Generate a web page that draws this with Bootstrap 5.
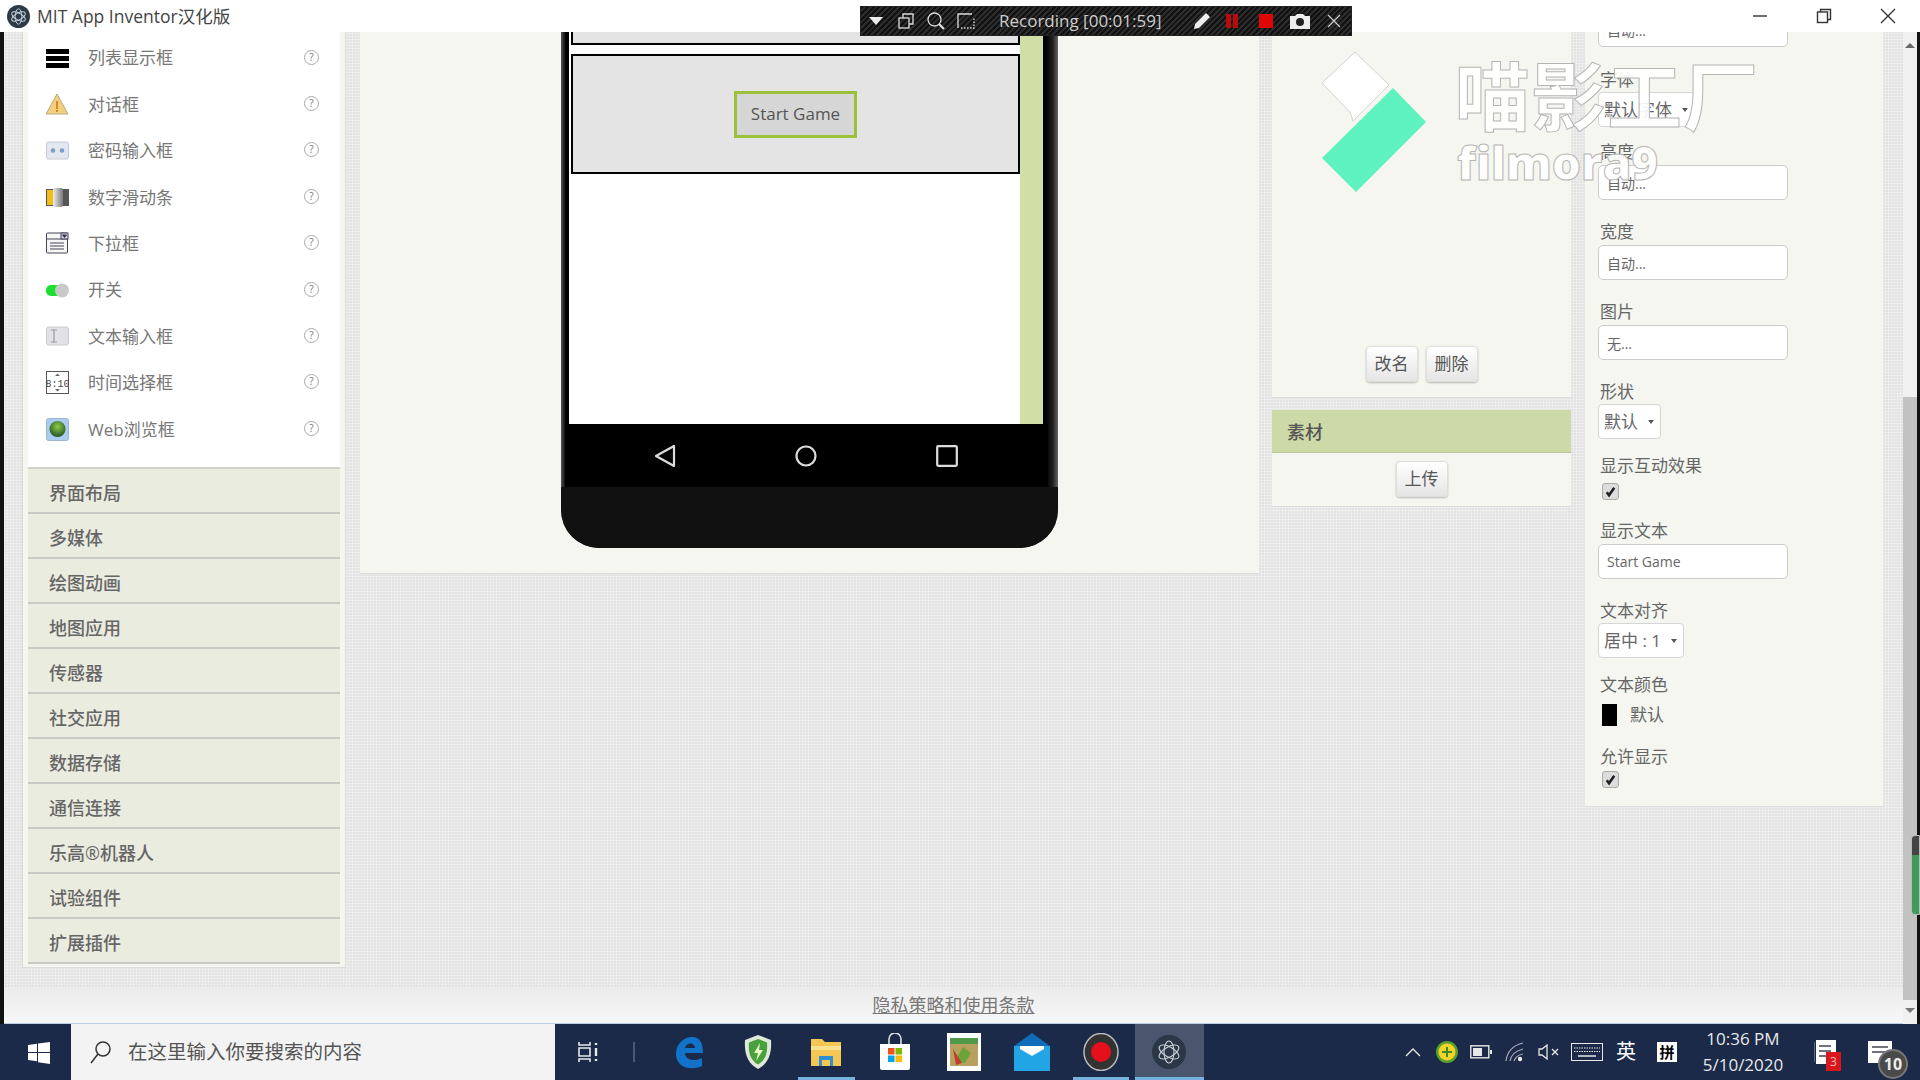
<!DOCTYPE html>
<html lang="zh-CN">
<head>
  <meta charset="UTF-8" />
  <meta name="viewport" content="width=device-width, initial-scale=1" />
  <title>MIT App Inventor汉化版</title>
  <link href="https://cdn.jsdelivr.net/npm/bootstrap@5.3.3/dist/css/bootstrap.min.css" rel="stylesheet">
  <style>
    html, body {
      height: 100%;
      margin: 0;
      overflow: hidden;
      font-family: "Open Sans", "Noto Sans CJK SC", sans-serif;
      color: #666;
    }

    .app-frame { width: 1920px; height: 1080px; position: relative; overflow: hidden; background: #fff; }

    /* Title bar */
    .title-bar { height: 32px; background: #fff; position: relative; z-index: 2; font-size: 17.5px; color: #444; }
    .title-logo { width: 23px; height: 23px; margin-left: 7px; margin-right: 7px; }
    .win-btn { width: 64px; display: flex; justify-content: center; }

    /* Main area */
    .work-row { height: 992px; }
    .edge-left { width: 4px; background: #111; flex: none; }
    .edge-right { width: 3px; background: #111; flex: none; }
    .work-col { width: 1899px; }
    .work-area {
      height: 956px;
      overflow: hidden;
      background-color: #e3e3e3;
      background-image:
        repeating-linear-gradient(0deg, rgba(255,255,255,.3) 0 1px, transparent 1px 3px),
        repeating-linear-gradient(90deg, rgba(255,255,255,.3) 0 1px, transparent 1px 3px);
      padding-left: 18px;
    }
    .page-footer {
      height: 36px;
      background: linear-gradient(#ececec, #f7f7f7);
      border-bottom: 1px solid #bcd0e6;
      font-size: 18px;
    }
    .page-footer a { color: #777; }

    .scroll-track { width: 14px; background: #f0f0f0; flex: none; position: relative; font-size: 0; }
    .scroll-thumb { position: absolute; left: 0; right: 0; top: 365px; height: 603px; background: #c2c2c2; }
    .scroll-arrow { position: absolute; left: 2px; width: 0; height: 0; border-left: 5px solid transparent; border-right: 5px solid transparent; }
    .scroll-arrow-up { top: 11px; border-bottom: 5px solid #666; }
    .scroll-arrow-down { top: 976px; border-top: 5px solid #777; }
    .float-meter {
      position: absolute; left: 8px; top: 803px; width: 9px; height: 80px;
      background: linear-gradient(#444 0 25%, #3f9a5b 25% 100%);
      border-radius: 4px 0 0 4px; border: 1px solid #bbb;
    }

    /* Palette */
    .palette { width: 324px; height: 936px; padding: 0 5px; background: #f5f6f0; border: 1px solid #dcdcdc; border-top: 0; flex: none; }
    .palette-list { background: #fff; height: 437px; padding-top: 3px; border-bottom: 2px solid #d0d0cc; }
    .palette-item { height: 46.4px; padding: 0 21px 0 18px; font-size: 17px; color: #777; }
    .palette-icon { width: 23px; height: 23px; margin-right: 19px; flex: none; }
    .help-mark {
      width: 15px; height: 15px; margin-left: auto; margin-top: -2px; border: 1.5px solid #aaa; border-radius: 50%;
      font-size: 10px; line-height: 12px; text-align: center; color: #777;
    }
    .palette-cat {
      height: 45px; padding: 6px 0 0 21px; background: #ebece0; border-bottom: 2px solid #c9cac3;
      font-size: 18px; font-weight: 500; color: #666;
    }

    /* Viewer */
    .viewer { width: 899px; height: 542px; margin-left: 14px; padding-left: 201px; background: #f5f6f0; border-bottom: 1px solid #ddd; flex: none; }
    .phone {
      width: 497px; height: 516px; background: linear-gradient(90deg, #555 0, #000 5px, #000 485px, #222 492px, #666 497px);
      border-radius: 0 0 38px 38px; overflow: hidden; position: relative;
    }
    .phone-screen { height: 392px; margin-left: 8px; width: 474px; background: #fff; }
    .phone-body { width: 451px; }
    .phone-stripe { width: 23px; background: #d1dea6; }
    .arrange-top { height: 13px; margin-left: 2px; background: #e4e4e4; border: 2px solid #000; border-top: 0; }
    .arrange-main {
      height: 120px; margin-left: 2px; margin-top: 9px; background: #e4e4e4; border: 2px solid #000;
    }
    .game-btn {
      width: 123px; height: 47px; background: #d6d6d6; border: 3px solid #9dc03a; border-radius: 0;
      font-size: 17px; color: #555; padding: 0; font-family: "Open Sans", sans-serif;
    }
    .phone-nav { height: 63px; margin-left: 4px; width: 483px; background: #000; padding: 0 90px 0 89px; }
    .phone-chin { height: 61px; background: #111; }

    /* Project column */
    .project-col { width: 299px; margin-left: 13px; flex: none; }
    .project-box { height: 366px; background: #f5f6f0; padding-bottom: 15px; border-bottom: 1px solid #ddd; }
    .asset-box { margin-top: 12px; height: 97px; background: #f5f6f0; border-bottom: 1px solid #ddd; }
    .asset-head { height: 43px; padding: 2px 0 0 15px; background: #cdd9a6; font-size: 18px; font-weight: 500; color: #555; border-bottom: 1px solid #bcc5a0; }
    .soft-btn {
      width: 52px; height: 36px; padding: 0; font-size: 17px; color: #555;
      background: linear-gradient(#fff, #e5e5e5); border: 1px solid #dedede; border-radius: 4px;
      box-shadow: 0 1px 2px rgba(0,0,0,.25);
    }

    /* Properties */
    .props { width: 298px; height: 775px; margin-left: 14px; padding-left: 13px; background: #f5f6f0; border-bottom: 1px solid #ddd; flex: none; font-size: 17px; color: #666; }
    .prop-label { line-height: 22px; margin-bottom: 2px; padding-left: 2px; }
    .prop-label-wide { margin-bottom: 6px; }
    .prop-label-select { margin-bottom: 1px; }
    .prop-label-end { margin-bottom: 3px; }
    .prop-row { margin-top: 21px; }
    .prop-row-first { margin-top: 22px; }
    .prop-row-narrow { margin-top: 14px; }
    .prop-row-tight { margin-top: 16px; }
    .prop-row-snug { margin-top: 20px; }
    .prop-row-last { margin-top: 18px; }
    .prop-input {
      width: 190px; height: 35px; padding: 0 8px; font-size: 14px; color: #666;
      border: 1px solid #ccc; border-radius: 5px; background: #fff; box-shadow: none;
    }
    .prop-top { margin-top: -20px; }
    .prop-select {
      height: 35px; padding: 0 6px 0 5px; font-size: 17px; color: #666; background: #fff;
      border: 1px solid #d5d5d5; border-radius: 4px; display: inline-flex; align-items: center; gap: 10px;
    }
    .prop-select::after { content: ""; border-left: 3px solid transparent; border-right: 3px solid transparent; border-top: 4px solid #555; }
    .prop-check,
    .prop-check:checked {
      display: block; width: 17px; height: 17px; margin: 0 0 0 4px; border: 1px solid #aaa; border-radius: 3px; background-color: #dcdcdc;
      background-image: url("data:image/svg+xml,%3csvg xmlns='http://www.w3.org/2000/svg' viewBox='0 0 20 20'%3e%3cpath fill='none' stroke='%23222' stroke-width='3.500' d='M5 11l3 4 7-10'/%3e%3c/svg%3e");
    }
    .color-chip { width: 15px; height: 22px; margin-left: 4px; margin-right: 13px; background: #000; }

    /* Overlays */
    .rec-bar {
      position: absolute; left: 860px; top: 6px; width: 492px; height: 30px; z-index: 3;
      background: repeating-linear-gradient(135deg, #111 0 2px, #2c2c2c 2px 4px);
      color: #ccc; font-size: 17px; border: 1px solid #222; white-space: nowrap;
    }
    .rec-slot { width: 30px; display: flex; justify-content: center; align-items: center; flex: none; }
    .rec-text { width: 188px; margin-left: 18px; flex: none; }
    .logo-mark { position: absolute; left: 1318px; top: 48px; width: 112px; height: 148px; z-index: 1; }
    .mark-text {
      position: absolute; z-index: 1; color: rgba(255,255,255,.92); -webkit-text-stroke: 1px #b5b5b5; line-height: 1;
      font-family: "Noto Sans CJK SC", sans-serif; font-weight: 700;
    }
    .mark-cn { left: 1455px; top: 55px; font-size: 75px; letter-spacing: 1px; }
    .mark-en { left: 1457px; top: 139px; font-size: 46px; font-family: "Open Sans", sans-serif; font-weight: 800; }

    /* Taskbar */
    .task-bar { height: 56px; background: #1a2a48; color: #fff; }
    .start-slot { width: 71px; padding-left: 28px; flex: none; }
    .search-slot { width: 484px; height: 56px; background: #f3f3f3; padding-left: 19px; font-size: 19.5px; color: #555; flex: none; }
    .search-slot svg { margin-right: 16px; }
    .view-slot { width: 66px; flex: none; display: flex; justify-content: center; }
    .task-sep { width: 2px; height: 20px; margin: 0 20px 0 12px; background: #4a5870; flex: none; }
    .app-slot { width: 68.6px; height: 56px; display: flex; align-items: center; justify-content: center; flex: none; position: relative; }
    .app-open::after { content: ""; position: absolute; left: 6px; right: 6px; bottom: 0; height: 3px; background: #76b2e0; }
    .app-active { background: #4a566e; }
    .app-active::after { left: 0; right: 0; }
    .tray-zone { margin-left: auto; padding-right: 12px; }
    .tray-slot { width: 34px; display: flex; align-items: center; justify-content: center; flex: none; }
    .tray-key { width: 42px; }
    .tray-ime { width: 36px; font-size: 20px; }
    .tray-pin { width: 46px; }
    .pin-box { width: 20px; height: 20px; background: #fff; color: #000; font-size: 15px; line-height: 20px; text-align: center; font-weight: 700; }
    .tray-clock { width: 108px; font-size: 17px; line-height: 26px; text-align: center; color: #e8e8e8; padding-right: 2px; }
    .tray-note { width: 54px; position: relative; }
    .tray-msg { width: 56px; position: relative; }
    .note-badge {
      position: absolute; left: 28px; top: 12px; width: 15px; height: 19px; background: #d8161c; font-size: 12px; text-align: center; line-height: 19px; color: #fbb;
    }
    .msg-badge {
      position: absolute; left: 26px; top: 8px; width: 30px; height: 30px; border-radius: 50%; background: #4a4a4a; border: 2px solid #777;
      font-size: 16px; font-weight: 700; line-height: 26px; text-align: center; color: #eee;
    }
  </style>
</head>
<body>
<div class="app-frame">

  <!-- title bar -->
  <div class="title-bar d-flex align-items-center">
    <svg class="title-logo" viewBox="0 0 24 24"><circle cx="12" cy="12" r="12" fill="#2c3947"/><g fill="none" stroke="#c8d0d8" stroke-width="1"><ellipse cx="12" cy="12" rx="8" ry="3.5" transform="rotate(30 12 12)"/><ellipse cx="12" cy="12" rx="8" ry="3.5" transform="rotate(90 12 12)"/><ellipse cx="12" cy="12" rx="8" ry="3.5" transform="rotate(150 12 12)"/></g></svg>
    <span>MIT App Inventor汉化版</span>
    <div class="ms-auto d-flex align-items-center">
      <div class="win-btn"><svg width="16" height="16" viewBox="0 0 16 16"><path d="M1 8h14" stroke="#333" stroke-width="1.4"/></svg></div>
      <div class="win-btn"><svg width="16" height="16" viewBox="0 0 16 16" fill="none" stroke="#333" stroke-width="1.4"><rect x="1.5" y="4" width="10" height="10.5"/><path d="M4.5 4V1.5h10V11.5h-3"/></svg></div>
      <div class="win-btn"><svg width="16" height="16" viewBox="0 0 16 16"><path d="M1 1l14 14M15 1L1 15" stroke="#333" stroke-width="1.4"/></svg></div>
    </div>
  </div>

  <div class="work-row d-flex">
    <div class="edge-left"></div>
    <div class="work-col d-flex flex-column">
      <div class="work-area d-flex align-items-start">

        <!-- palette -->
        <div class="palette">
          <div class="palette-list">
            <div class="palette-item d-flex align-items-center">
              <svg class="palette-icon" viewBox="0 0 23 23"><path d="M0 2h23v5H0zM0 9h23v5H0zM0 16h23v5H0z" fill="#000"/></svg>
              <span>列表显示框</span><span class="help-mark">?</span>
            </div>
            <div class="palette-item d-flex align-items-center">
              <svg class="palette-icon" viewBox="0 0 23 23"><path d="M11 1L22 21H0z" fill="#f2cf7c" stroke="#b9a982"/><path d="M10 8h2v8h-2zM10 17h2v2h-2z" fill="#d88a20"/></svg>
              <span>对话框</span><span class="help-mark">?</span>
            </div>
            <div class="palette-item d-flex align-items-center">
              <svg class="palette-icon" viewBox="0 0 23 23"><rect x=".5" y="3" width="22" height="17" rx="2" fill="#e3e8f0" stroke="#c4c9d2"/><circle cx="7" cy="11.5" r="2.3" fill="#7f9cc4"/><circle cx="16" cy="11.5" r="2.3" fill="#7f9cc4"/></svg>
              <span>密码输入框</span><span class="help-mark">?</span>
            </div>
            <div class="palette-item d-flex align-items-center">
              <svg class="palette-icon" viewBox="0 0 23 23"><defs><linearGradient id="sl" x1="0" x2="1"><stop offset="0" stop-color="#eee"/><stop offset="1" stop-color="#777"/></linearGradient></defs><rect x="0" y="3" width="23" height="17" fill="#555"/><rect x="1" y="4" width="7" height="15" fill="#f3bd16"/><rect x="7" y="2" width="10" height="19" rx="2" fill="url(#sl)"/></svg>
              <span>数字滑动条</span><span class="help-mark">?</span>
            </div>
            <div class="palette-item d-flex align-items-center">
              <svg class="palette-icon" viewBox="0 0 23 23" fill="none" stroke="#445"><rect x=".5" y="1" width="21" height="20" rx="1" fill="#f6f6f6"/><path d="M.5 7h21M4 11h14M4 14h14M4 17h14"/><rect x="15" y="1" width="7" height="6" fill="#ccd"/><path d="M16.5 3l2 2.5 2-2.5z" fill="#224"/></svg>
              <span>下拉框</span><span class="help-mark">?</span>
            </div>
            <div class="palette-item d-flex align-items-center">
              <svg class="palette-icon" viewBox="0 0 23 23"><rect x="0" y="6" width="20" height="11" rx="5" fill="#1be030"/><circle cx="16" cy="11.5" r="7" fill="#c9c9c9"/></svg>
              <span>开关</span><span class="help-mark">?</span>
            </div>
            <div class="palette-item d-flex align-items-center">
              <svg class="palette-icon" viewBox="0 0 23 23"><rect x=".5" y="2" width="22" height="18" rx="2" fill="#e2e2e6" stroke="#ccc"/><path d="M5 5h6M5 17h6M8 5v12" stroke="#9a9aa6" stroke-width="1.2"/></svg>
              <span>文本输入框</span><span class="help-mark">?</span>
            </div>
            <div class="palette-item d-flex align-items-center">
              <svg class="palette-icon" viewBox="0 0 23 23"><rect x=".5" y=".5" width="22" height="22" fill="#fff" stroke="#555"/><text x="11.5" y="15.5" font-size="10" font-family="Liberation Mono, monospace" text-anchor="middle" fill="#444">8:10</text><path d="M9 5l2.5-2.5L14 5zM9 18l2.5 2.5L14 18z" fill="#666"/></svg>
              <span>时间选择框</span><span class="help-mark">?</span>
            </div>
            <div class="palette-item d-flex align-items-center">
              <svg class="palette-icon" viewBox="0 0 23 23"><defs><radialGradient id="gl" cx=".5" cy=".35" r=".7"><stop offset="0" stop-color="#8ecb4c"/><stop offset="1" stop-color="#1c4a20"/></radialGradient></defs><rect x=".5" y=".5" width="22" height="22" rx="2" fill="#a9cdf0" stroke="#9db6cd"/><circle cx="11.5" cy="11" r="8" fill="url(#gl)"/></svg>
              <span>Web浏览框</span><span class="help-mark">?</span>
            </div>
          </div>
          <div class="d-flex flex-column">
            <div class="palette-cat d-flex align-items-center">界面布局</div>
            <div class="palette-cat d-flex align-items-center">多媒体</div>
            <div class="palette-cat d-flex align-items-center">绘图动画</div>
            <div class="palette-cat d-flex align-items-center">地图应用</div>
            <div class="palette-cat d-flex align-items-center">传感器</div>
            <div class="palette-cat d-flex align-items-center">社交应用</div>
            <div class="palette-cat d-flex align-items-center">数据存储</div>
            <div class="palette-cat d-flex align-items-center">通信连接</div>
            <div class="palette-cat d-flex align-items-center">乐高®机器人</div>
            <div class="palette-cat d-flex align-items-center">试验组件</div>
            <div class="palette-cat d-flex align-items-center">扩展插件</div>
          </div>
        </div>

        <!-- viewer -->
        <div class="viewer">
          <div class="phone">
            <div class="phone-screen d-flex">
              <div class="phone-body">
                <div class="arrange-top"></div>
                <div class="arrange-main d-flex align-items-center justify-content-center">
                  <button type="button" class="btn game-btn">Start Game</button>
                </div>
              </div>
              <div class="phone-stripe"></div>
            </div>
            <div class="phone-nav d-flex align-items-center justify-content-between">
              <svg width="22" height="24" viewBox="0 0 22 24" fill="none" stroke="#ddd" stroke-width="2.2" stroke-linejoin="round"><path d="M20 2v20L2 12z"/></svg>
              <svg width="22" height="22" viewBox="0 0 22 22" fill="none" stroke="#ddd" stroke-width="2.2"><circle cx="11" cy="11" r="9.5"/></svg>
              <svg width="22" height="22" viewBox="0 0 22 22" fill="none" stroke="#ddd" stroke-width="2.2"><rect x="1.2" y="1.2" width="19.6" height="19.6" rx="1"/></svg>
            </div>
            <div class="phone-chin"></div>
          </div>
        </div>

        <!-- project -->
        <div class="project-col">
          <div class="project-box d-flex align-items-end justify-content-center gap-2">
            <button type="button" class="btn soft-btn">改名</button>
            <button type="button" class="btn soft-btn">删除</button>
          </div>
          <div class="asset-box">
            <div class="asset-head d-flex align-items-center">素材</div>
            <div class="d-flex justify-content-center pt-2">
              <button type="button" class="btn soft-btn">上传</button>
            </div>
          </div>
        </div>

        <!-- properties -->
        <div class="props">
          <input class="form-control prop-input prop-top" value="自动...">
          <div class="prop-row-first">
            <div class="prop-label prop-label-select">字体</div>
            <button type="button" class="btn prop-select">默认字体</button>
          </div>
          <div class="prop-row-narrow">
            <div class="prop-label">高度</div>
            <input class="form-control prop-input" value="自动...">
          </div>
          <div class="prop-row">
            <div class="prop-label">宽度</div>
            <input class="form-control prop-input" value="自动...">
          </div>
          <div class="prop-row">
            <div class="prop-label">图片</div>
            <input class="form-control prop-input" value="无...">
          </div>
          <div class="prop-row">
            <div class="prop-label prop-label-select">形状</div>
            <button type="button" class="btn prop-select">默认</button>
          </div>
          <div class="prop-row-tight">
            <div class="prop-label prop-label-wide">显示互动效果</div>
            <input class="form-check-input prop-check" type="checkbox" checked>
          </div>
          <div class="prop-row-snug">
            <div class="prop-label">显示文本</div>
            <input class="form-control prop-input" value="Start Game">
          </div>
          <div class="prop-row">
            <div class="prop-label prop-label-select">文本对齐</div>
            <button type="button" class="btn prop-select">居中 : 1</button>
          </div>
          <div class="prop-row-tight">
            <div class="prop-label prop-label-wide">文本颜色</div>
            <div class="d-flex align-items-center"><span class="color-chip"></span><span>默认</span></div>
          </div>
          <div class="prop-row-last">
            <div class="prop-label prop-label-end">允许显示</div>
            <input class="form-check-input prop-check" type="checkbox" checked>
          </div>
        </div>
      </div>
      <div class="page-footer d-flex align-items-center justify-content-center">
        <a href="#">隐私策略和使用条款</a>
      </div>
    </div>
    <div class="scroll-track">
      <div class="scroll-arrow scroll-arrow-up"></div>
      <div class="scroll-thumb"></div>
      <div class="scroll-arrow scroll-arrow-down"></div>
      <div class="float-meter"></div>
    </div>
    <div class="edge-right"></div>
  </div>

  <!-- taskbar -->
  <div class="task-bar d-flex align-items-center">
    <div class="start-slot">
      <svg width="22" height="22" viewBox="0 0 22 22" fill="#fff"><path d="M0 3l9-1.3V10H0zM10 1.5L22 0v10H10zM0 11h9v8.3L0 18zM10 11h12v11l-12-1.7z"/></svg>
    </div>
    <div class="search-slot d-flex align-items-center">
      <svg width="22" height="24" viewBox="0 0 22 24" fill="none" stroke="#333" stroke-width="1.5"><circle cx="13" cy="9" r="7"/><path d="M8 14L1 23"/></svg>
      <span>在这里输入你要搜索的内容</span>
    </div>
    <div class="view-slot">
      <svg width="24" height="22" viewBox="0 0 24 22" fill="none" stroke="#e8e8e8" stroke-width="1.6"><path d="M3 1v3h11V1M3 21v-3h11v3M3 7h11v8H3z"/><path d="M20 2v2M20 7v8M20 18v2" stroke-width="2.4"/></svg>
    </div>
    <div class="task-sep"></div>
    <div class="app-slot">
      <svg width="30" height="36" viewBox="0 0 30 36"><path d="M2 20C2 8 12 2 20 3c7 1 9 8 9 16H11c0 7 9 9 17 5v8c-11 5-26 2-26-12zM11 14h10c0-6-9-6-10 0z" fill="#1173c9"/></svg>
    </div>
    <div class="app-slot">
      <svg width="28" height="36" viewBox="0 0 28 36"><path d="M14 1l13 5c1 14-3 24-13 29C4 30 0 20 1 6z" fill="#dfe9d8"/><path d="M14 5l9 3.5c1 11-2 18-9 22-7-4-10-11-9-22z" fill="#49a13e"/><path d="M16 9l-6 10h4l-2 8 7-11h-4z" fill="#e9f5c2"/></svg>
    </div>
    <div class="app-slot app-open">
      <svg width="32" height="32" viewBox="0 0 32 32"><path d="M1 3h11l3 3h16v24H1z" fill="#f4c653"/><path d="M1 10h30v4H1z" fill="#fbe08f"/><path d="M9 20h14v10h-3v-6h-8v6H9z" fill="#2f8fd3"/></svg>
    </div>
    <div class="app-slot">
      <svg width="32" height="38" viewBox="0 0 32 38"><path d="M1 11h30v24a2 2 0 0 1-2 2H3a2 2 0 0 1-2-2z" fill="#fff"/><path d="M10 11V6a6 6 0 0 1 12 0v5" fill="none" stroke="#ddd" stroke-width="1.6"/><rect x="9" y="15" width="6.5" height="6.5" fill="#f25022"/><rect x="16.5" y="15" width="6.5" height="6.5" fill="#7fba00"/><rect x="9" y="22.5" width="6.5" height="6.5" fill="#00a4ef"/><rect x="16.5" y="22.5" width="6.5" height="6.5" fill="#ffb900"/></svg>
    </div>
    <div class="app-slot">
      <svg width="34" height="38" viewBox="0 0 34 38"><rect width="34" height="38" fill="#fff"/><rect x="3" y="5" width="28" height="28" fill="#b8a060"/><path d="M3 5h28v6H3z" fill="#4f9a4a"/><path d="M8 28l8-14 8 6-6 10z" fill="#6ea33a"/><path d="M6 16l9 14-6 2z" fill="#c23d2c"/></svg>
    </div>
    <div class="app-slot">
      <svg width="36" height="38" viewBox="0 0 36 38"><path d="M0 13L18 0l18 13v2H0z" fill="#0f6cb8"/><path d="M0 13h36v25H0z" fill="#21a5e5"/><path d="M6 13h24v3L18 23 6 16z" fill="#fff"/></svg>
    </div>
    <div class="app-slot app-open">
      <svg width="36" height="38" viewBox="0 0 36 38"><ellipse cx="18" cy="19" rx="17" ry="18.5" fill="#333" stroke="#bbb" stroke-width="1.5"/><circle cx="18" cy="19" r="10" fill="#e5101a"/></svg>
    </div>
    <div class="app-slot app-open app-active">
      <svg width="34" height="34" viewBox="0 0 34 34"><circle cx="17" cy="17" r="17" fill="#2b3647"/><g fill="none" stroke="#c9d0d8" stroke-width="1.1"><ellipse cx="17" cy="17" rx="11" ry="5" transform="rotate(30 17 17)"/><ellipse cx="17" cy="17" rx="11" ry="5" transform="rotate(90 17 17)"/><ellipse cx="17" cy="17" rx="11" ry="5" transform="rotate(150 17 17)"/></g></svg>
    </div>

    <div class="tray-zone d-flex align-items-center">
      <div class="tray-slot"><svg width="16" height="10" viewBox="0 0 16 10" fill="none" stroke="#e8e8e8" stroke-width="1.4"><path d="M1 9l7-7 7 7"/></svg></div>
      <div class="tray-slot"><svg width="22" height="22" viewBox="0 0 22 22"><circle cx="11" cy="11" r="11" fill="#5aa02c"/><circle cx="11" cy="11" r="8.5" fill="#f2d32c"/><path d="M10 6h2v4h4v2h-4v4h-2v-4H6v-2h4z" fill="#3c8a2a"/></svg></div>
      <div class="tray-slot"><svg width="22" height="14" viewBox="0 0 22 14" fill="none"><rect x=".8" y=".8" width="18" height="12" stroke="#e8e8e8" stroke-width="1.4"/><rect x="3" y="3" width="9" height="8" fill="#e8e8e8"/><rect x="20" y="5" width="2" height="4" fill="#e8e8e8"/></svg></div>
      <div class="tray-slot"><svg width="20" height="20" viewBox="0 0 20 20" fill="none" stroke="#aab" stroke-width="1.2"><path d="M1 19C2 10 8 3 18 1M5 19c1-6 5-10 13-12M9 19c1-3 3-6 9-7"/><circle cx="15" cy="17" r="2.2" fill="#eee" stroke="none"/></svg></div>
      <div class="tray-slot"><svg width="22" height="18" viewBox="0 0 22 18" fill="none" stroke="#e8e8e8" stroke-width="1.3"><path d="M1 6h3l5-4v14l-5-4H1zM14 6l6 6M20 6l-6 6"/></svg></div>
      <div class="tray-slot tray-key"><svg width="32" height="18" viewBox="0 0 32 18" fill="none" stroke="#e8e8e8"><rect x=".5" y=".5" width="31" height="17"/><path d="M3 5h26M3 8.500h26" stroke-dasharray="1.500 1"/><path d="M7 13h18" stroke-width="1.500"/></svg></div>
      <div class="tray-slot tray-ime">英</div>
      <div class="tray-slot tray-pin"><div class="pin-box">拼</div></div>
      <div class="tray-clock"><div>10:36 PM</div><div>5/10/2020</div></div>
      <div class="tray-slot tray-note">
        <svg width="22" height="24" viewBox="0 0 22 24"><path d="M0 2v20" stroke="#aaa" stroke-width="1"/><rect x="2" y="0" width="20" height="24" fill="#fff"/><path d="M5 6h12M5 11h12M5 16h8" stroke="#445" stroke-width="1.500"/></svg>
        <span class="note-badge">3</span>
      </div>
      <div class="tray-slot tray-msg">
        <svg width="24" height="22" viewBox="0 0 24 22"><path d="M0 0h24v22H0z" fill="#fff"/><path d="M4 6h16M4 11h16" stroke="#445" stroke-width="1.500"/></svg>
        <span class="msg-badge">10</span>
      </div>
    </div>
  </div>

  <!-- screen recorder toolbar -->
  <div class="rec-bar d-flex align-items-center">
    <div class="rec-slot"><svg width="16" height="10" viewBox="0 0 16 10"><path d="M1 1h14L8 9z" fill="#eee"/></svg></div>
    <div class="rec-slot"><svg width="16" height="16" viewBox="0 0 16 16" fill="none" stroke="#ddd" stroke-width="1.300"><rect x="1" y="5" width="10" height="10"/><path d="M5 5V1h10v10h-4"/></svg></div>
    <div class="rec-slot"><svg width="18" height="18" viewBox="0 0 18 18" fill="none" stroke="#ddd" stroke-width="1.300"><circle cx="7.500" cy="7.500" r="6.500"/><path d="M12 12l5 5" stroke-width="2.200"/></svg></div>
    <div class="rec-slot"><svg width="18" height="16" viewBox="0 0 18 16" fill="none" stroke="#ddd" stroke-width="1.300"><path d="M1 15V1h14"/><path d="M4 15h13V4" stroke-dasharray="1.500 1.500"/></svg></div>
    <span class="rec-text">Recording [00:01:59]</span>
    <div class="rec-slot"><svg width="18" height="18" viewBox="0 0 18 18"><path d="M13 1l4 4L6 16l-5 1 1-5z" fill="#eee"/></svg></div>
    <div class="rec-slot"><svg width="12" height="14" viewBox="0 0 12 14" fill="#b80c0c"><path d="M0 0h5v14H0zM7 0h5v14H7z"/></svg></div>
    <div class="rec-slot ms-1"><svg width="14" height="14" viewBox="0 0 14 14"><rect width="14" height="14" fill="#e00606"/></svg></div>
    <div class="rec-slot ms-1"><svg width="20" height="15" viewBox="0 0 20 15"><path d="M0 2h5l2-2h6l2 2h5v13H0z" fill="#eee"/><circle cx="10" cy="8" r="4" fill="#222"/></svg></div>
    <div class="rec-slot ms-1"><svg width="14" height="14" viewBox="0 0 14 14"><path d="M1 1l12 12M13 1L1 13" stroke="#ccc" stroke-width="1.200"/></svg></div>
  </div>

  <!-- video watermark -->
  <svg class="logo-mark" viewBox="0 0 112 148">
    <path d="M37 4l34 33-36 36-3-9L4 35z" fill="#fff" stroke="#c9c9c9" stroke-width=".8"/>
    <path d="M75 40l33 34-70 70-34-34z" fill="#5ef2c0"/>
  </svg>
  <div class="mark-text mark-cn">喵影工厂</div>
  <div class="mark-text mark-en">filmora9</div>
</div>
<script src="https://cdn.jsdelivr.net/npm/bootstrap@5.3.3/dist/js/bootstrap.bundle.min.js"></script>
</body>
</html>
